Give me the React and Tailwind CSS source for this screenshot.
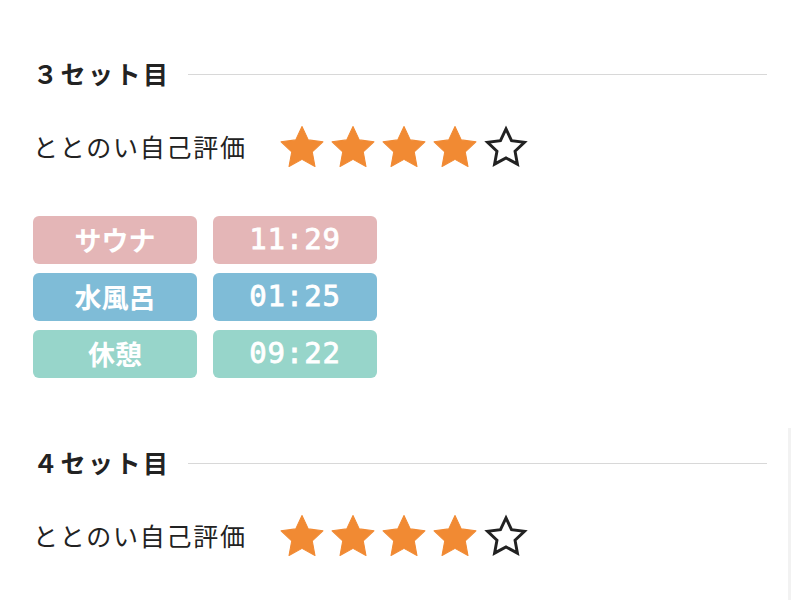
import React from "react";

const STAR = "12,2.2 15,8.6 22,9.5 16.9,14.3 18.2,21.3 12,17.9 5.8,21.3 7.1,14.3 2,9.5 9,8.6";

const Star = ({ filled }) => (
  <svg viewBox="1.5 1.5 21 21" className="w-[44px] h-[44px]">
    {filled ? (
      <polygon points={STAR} fill="#f18a33" stroke="#f18a33" strokeWidth="0.5" strokeLinejoin="round" />
    ) : (
      <polygon
        points={STAR}
        fill="none"
        stroke="#222"
        strokeWidth="1.6"
        strokeLinejoin="miter"
        transform="translate(12 12) scale(0.88) translate(-12 -12)"
      />
    )}
  </svg>
);

const rows = [
  { label: "サウナ", bg: "bg-[#e4b6b7]" },
  { label: "水風呂", bg: "bg-[#7fbcd7]" },
  { label: "休憩", bg: "bg-[#97d5ca]" },
];

const SetBlock = ({ title, rating, times }) => (
  <section>
    <div className="flex items-center gap-[17px] h-9">
      <h2 className="text-[25px] font-bold tracking-[0.1em] text-[#222] whitespace-nowrap">
        {title}
      </h2>
      <div className="flex-1 h-px bg-[#d8d8d8]" />
    </div>

    <div className="flex items-center mt-[33px] h-[44px]">
      <span className="text-[25px] tracking-[0.07em] text-[#222] w-[247px]">
        ととのい自己評価
      </span>
      <div className="flex gap-[7px]">
        {[1, 2, 3, 4, 5].map((n) => (
          <Star key={n} filled={n <= rating} />
        ))}
      </div>
    </div>

    {times && (
      <div className="mt-[47px] grid grid-cols-[164px_164px] gap-x-[16px] gap-y-[9px]">
        {rows.map((r, i) => (
          <React.Fragment key={r.label}>
            <div
              className={`${r.bg} h-[48px] rounded-[6px] flex items-center justify-center text-white font-semibold text-[27px]`}
            >
              {r.label}
            </div>
            <div
              className={`${r.bg} h-[48px] rounded-[6px] flex items-center justify-center text-white text-[29px] tracking-[0.03em] [-webkit-text-stroke:0.8px_white] font-['DejaVu_Sans_Mono',monospace]`}
            >
              {times[i]}
            </div>
          </React.Fragment>
        ))}
      </div>
    )}
  </section>
);

export default function App() {
  return (
    <div className="relative w-[800px] h-[600px] overflow-hidden bg-white font-['Noto_Sans_CJK_JP','Noto_Sans',sans-serif]">
      <main className="px-[33px] pt-[56px] flex flex-col gap-[67px]">
        <SetBlock title="３セット目" rating={4} times={["11:29", "01:25", "09:22"]} />
        <SetBlock title="４セット目" rating={4} />
      </main>
      <div className="absolute left-[788px] top-[428px] bottom-0 w-[3px] bg-[#f2f2f2]" />
    </div>
  );
}
